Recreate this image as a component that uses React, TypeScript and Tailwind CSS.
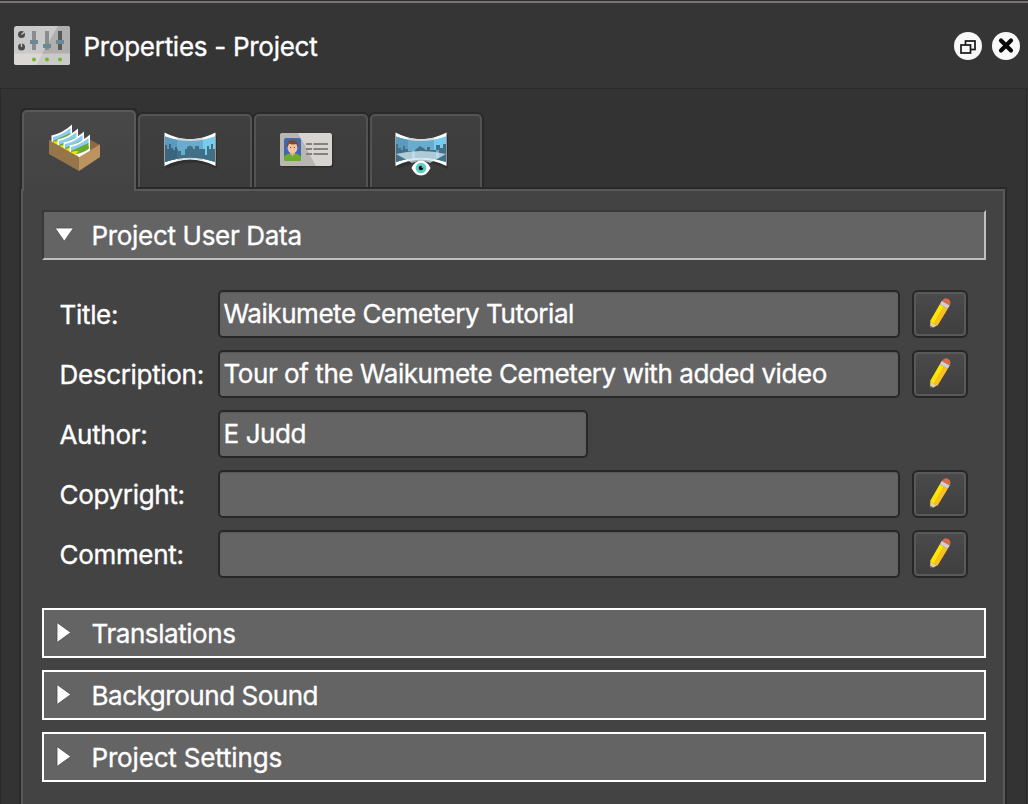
import React from "react";

function MixerIcon() {
  return (
    <svg width="56" height="40" viewBox="0 0 56 40" className="block shrink-0">
      <rect width="56" height="39" rx="2.5" fill="#c9c9c9" />
      <path d="M44 0H53.5Q56 0 56 2.5V28H28Z" fill="#b0afae" />
      <path d="M0 27.5H29L22.500 39H2.500Q0 39 0 36.500Z" fill="#dbd7d5" />
      <path d="M29 27.500H56V36.500Q56 39 53.500 39H22.500Z" fill="#cbc9c7" />
      <g fill="#8c8c8c">
        <rect x="18" y="5" width="4" height="19" />
        <rect x="31" y="5" width="4" height="19" />
      </g>
      <rect x="44" y="5" width="4" height="19" fill="#585858" />
      <g fill="#6b8994">
        <rect x="16" y="14" width="8" height="4" />
        <rect x="29" y="18" width="8" height="4" />
        <rect x="42" y="14" width="8" height="4" />
      </g>
      <circle cx="7.500" cy="8.500" r="3.500" fill="#4b4b4b" />
      <circle cx="7.500" cy="21" r="3.500" fill="#4b4b4b" />
      <path d="M7.500 8.500L11 5.500M7.500 21V17" stroke="#c9c9c9" strokeWidth="1.300" />
      <g fill="#74b62f">
        <circle cx="20" cy="33.500" r="2" />
        <circle cx="33" cy="33.500" r="2" />
        <circle cx="46" cy="33.500" r="2" />
      </g>
    </svg>
  );
}

function BoxIcon() {
  const cards: number[][] = [
    [0, 0],
    [6, 4],
    [12, 7],
    [18, 10],
  ];
  return (
    <svg width="52" height="48" viewBox="0 0 52 48" className="block">
      <path d="M0 17L21 5L51 21L31 33Z" fill="#6f5537" />
      <path d="M30 10L51 21L31 33Z" fill="#8d6a43" />
      {cards.map(([x, y]) => (
        <g key={x} transform={`translate(${x} ${y})`}>
          <path d="M2.500 11.500Q14 9 23 0.500V17Q15 24 2.500 27Z" fill="#fff" />
          <path d="M4 13Q14 10.500 21.500 4V10L5 18L4 17Z" fill="#87cdec" />
          <path d="M4 17L21.500 9V16Q14 22 4 25Z" fill="#69a92c" />
          <path d="M4 18L9 17L18 19Q12 23 4 25Z" fill="#f3e600" />
          <path d="M7 23Q14 19 21.500 13V16Q14 22 7 24Z" fill="#69a92c" />
        </g>
      ))}
      <path d="M0 16L30 33V47L0 30Z" fill="#96754b" />
      <path d="M30 33L51 20.500V33L30 47Z" fill="#bd935f" />
      <path d="M26 30L30 33L41 26.500V24Q35 29 26 30Z" fill="#fff" />
      <path d="M27 29Q34 27 39.500 21.500V24Q34 29 27 30Z" fill="#69a92c" />
    </svg>
  );
}

function Panorama({ view = false }: { view?: boolean }) {
  return (
    <svg width="54" height="46" viewBox="0 0 54 46" className="block">
      <path d="M2 3Q28 16 53 3V37Q28 24 2 37Z" fill="#303030" />
      <path d="M0.500 0.500Q26 14 51.500 0.500V34Q26 21 0.500 34Z" fill="#fff" />
      <path d="M13 5.500Q26 9 39 5.500V28.500Q26 25.500 13 28.500Z" fill="#d4d7d9" />
      <path d="M1 4.500Q26 13.500 51 4.500V30Q26 21.500 1 30Z" fill="#69acce" />
      <path d="M1 4.500Q6 6.500 13 7.800V26.800Q6 28 1 30Z" fill="#5a9abd" />
      <path d="M39 7.800Q46 6.500 51 4.500V30Q46 28 39 26.800Z" fill="#77cbed" />
      {view ? (
        <>
          <path d="M1 12H3V16H6V18H8V14H10V17H13V19H20V18L25 14L30 17V18H32V15H35V18H41V13H45V16H48V12H51V30Q26 21.500 1 30Z" fill="#427087" />
          <path d="M17 19H20V26H17ZM41 18H44V26H41Z" fill="#69acce" />
          <path d="M1 22Q26 16 51 22L35 31Q26 27 17 31Z" fill="#d9eef7" opacity="0.72" />
          <path d="M16.500 36Q20 28.500 26 28.500Q32 28.500 35.500 36Q32 43.500 26 43.500Q20 43.500 16.500 36Z" fill="#fff" />
          <circle cx="26" cy="36" r="5.300" fill="#59d0c8" />
          <circle cx="26" cy="36" r="2.300" fill="#111" />
          <circle cx="27.200" cy="35" r="0.700" fill="#fff" />
        </>
      ) : (
        <>
          <path d="M1 13H3V17H5V12H7V16H9V18H11V15H13V17H14V19H17V23H21V17H23V15L26 13.500L29 15V17H31V14H35V17H41V23H43V14H45V17H47V12H49V17H51V30Q26 21.500 1 30Z" fill="#417086" />
          <path d="M1 13H3V17H5V12H7V16H9V18H11V15H13V26.800Q6 28 1 30Z" fill="#3a677d" />
        </>
      )}
    </svg>
  );
}

function CardIcon() {
  return (
    <svg width="54" height="35" viewBox="0 0 54 35" className="block">
      <rect x="1.500" y="1.500" width="52" height="33" rx="2.500" fill="#303030" />
      <rect width="52" height="33" rx="2.500" fill="#d8d4d2" />
      <path d="M2.500 0H18L36 33H2.500Q0 33 0 30.500V2.500Q0 0 2.500 0Z" fill="#b9b6b4" />
      <rect x="4" y="5" width="17" height="23" rx="2" fill="#3e69b1" />
      <path d="M4 24Q5 21.500 9.500 20.500H15.500Q20 21.500 21 24V26Q21 28 19 28H6Q4 28 4 26Z" fill="#6bac2c" />
      <path d="M10 18H15V21L12.500 23.500L10 21Z" fill="#dba685" />
      <ellipse cx="12.500" cy="14.500" rx="5" ry="6" fill="#f2c3a1" />
      <path d="M7.300 15Q5.500 7 12.500 7Q19.500 7 17.700 15L16.500 11Q12 12 9 10.500Z" fill="#7b4a2d" />
      <circle cx="10.600" cy="14.500" r="0.600" fill="#584030" />
      <circle cx="14.400" cy="14.500" r="0.600" fill="#584030" />
      <g fill="#84827f">
        <path d="M26 10H32V12H26ZM33.500 10H48V12H33.500ZM26 15H32V17H26ZM33.500 15H48V17H33.500ZM26 20H32V22H26ZM33.500 20H48V22H33.500Z" />
      </g>
    </svg>
  );
}

function Pencil() {
  return (
    <svg width="22" height="32" viewBox="0 0 22 32" className="block">
      <path d="M1.300 24.500L8 28.400L3.500 31Q1 31.500 1.200 29Z" fill="#e5cfa0" />
      <path d="M1.200 28.700L4.600 30.400L2 31.500Z" fill="#60503c" />
      <path d="M1 24.300L10.800 7.200L15 9.500L5 27Z" fill="#ffe600" />
      <path d="M14.800 9.300L18.800 11.700L8.500 28.800L4.700 26.800Z" fill="#fcbf22" />
      <path d="M10.800 7.300L12.800 3.800L20.800 8.200L18.800 11.800Z" fill="#cfcfd2" />
      <path d="M12.800 4Q15.300 0 19 1.700Q22.800 4 20.800 8.400Z" fill="#d96c47" />
    </svg>
  );
}

function Header() {
  return (
    <header className="flex h-[88px] shrink-0 flex-col">
      <div className="h-[3px] shrink-0 border-b-2 border-[#787476] bg-[#2d2d2d]" />
      <div className="flex flex-1 items-center pr-2 pl-3.5">
        <MixerIcon />
        <h1 className="ml-[13.5px] pt-0.5 text-[26px] leading-8 tracking-[-0.28px]">Properties - Project</h1>
        <div className="ml-auto flex gap-2.5">
          <button aria-label="Detach" className="block size-7">
            <svg width="28" height="28" viewBox="0 0 28 28">
              <circle cx="14" cy="14" r="14" fill="#f8f8f8" />
              <rect x="11.500" y="9" width="9.500" height="8.500" fill="none" stroke="#171717" strokeWidth="1.700" />
              <rect x="7" y="13" width="9.500" height="8" fill="#f8f8f8" stroke="#171717" strokeWidth="1.700" />
            </svg>
          </button>
          <button aria-label="Close" className="block size-7">
            <svg width="28" height="28" viewBox="0 0 28 28">
              <circle cx="14" cy="14" r="14" fill="#f8f8f8" />
              <path d="M9 8.500L19 18.500M19 8.500L9 18.500" stroke="#080808" strokeWidth="4.200" strokeLinecap="round" />
            </svg>
          </button>
        </div>
      </div>
    </header>
  );
}

const idleTab =
  "box-content flex h-[71px] justify-center rounded-t-[5px] border-x-2 border-t-2 border-[#535353] bg-gradient-to-b from-[#404040] to-[#3b3b3b] shadow-[0_0_0_2px_#292929] self-end";

function Tabs() {
  return (
    <nav className="relative z-10 flex h-[81px] gap-0.5 pl-px">
      <button className="z-10 box-content flex h-[79px] w-[110px] justify-center rounded-t-[5px] border-x-2 border-t-2 border-[#595959] bg-gradient-to-b from-[#484848] to-[#434343] pt-0 shadow-[0_-2px_0_#292929,2px_-2px_0_#292929,-2px_-2px_0_#292929]">
        <span className="mt-3 ml-[-9px]"><BoxIcon /></span>
      </button>
      <div className="flex h-[77px] gap-0.5 overflow-hidden pt-1 pr-0.5">
        <button className={`${idleTab} w-[110px]`}>
          <span className="mt-4 ml-[-9px]"><Panorama /></span>
        </button>
        <button className={`${idleTab} w-[110px]`}>
          <span className="mt-[17px] ml-[-8px]"><CardIcon /></span>
        </button>
        <button className={`${idleTab} w-[108px]`}>
          <span className="mt-4 ml-[-8px]"><Panorama view /></span>
        </button>
      </div>
    </nav>
  );
}

function Section({ title, track, open = false }: { title: string; track: string; open?: boolean }) {
  return (
    <button
      className={`flex h-[50px] w-full shrink-0 items-center border-2 bg-[#646464] text-left ${
        open ? "border-t-[#383838] border-r-[#c0c0c0] border-b-[#c0c0c0] border-l-[#383838]" : "border-white"
      }`}
    >
      <svg width="24" height="24" viewBox="0 0 24 24" className="ml-2 block shrink-0">
        {open ? (
          <path d="M3 5H21.500L12.250 18.200Z" fill="#fff" stroke="#4b4b4b" strokeWidth="0.800" />
        ) : (
          <path d="M5 1.500V21.500L18.800 11.500Z" fill="#fff" stroke="#4b4b4b" strokeWidth="0.800" />
        )}
      </svg>
      <span className={`ml-[15.5px] pt-0.5 text-[26px] leading-8 ${track}`}>{title}</span>
    </button>
  );
}

interface FieldProps {
  label: string;
  value?: string;
  track?: string;
  short?: boolean;
}

function Field({ label, value = "", track = "", short = false }: FieldProps) {
  return (
    <div className="flex h-12">
      <span className="ml-[-0.5px] w-[158.5px] shrink-0 pt-[9px] text-[26px] leading-8 tracking-[-0.32px] whitespace-nowrap">
        {label}
      </span>
      <div
        className={`h-12 shrink-0 rounded-[5px] border-2 border-[#272727] bg-[#646464] pt-1.5 pl-[3.5px] text-[26px] leading-8 whitespace-nowrap shadow-[inset_0_1px_1px_#585858] ${
          short ? "w-[370px]" : "w-[682px]"
        } ${track}`}
      >
        {value}
      </div>
      {!short && (
        <button
          aria-label={`Edit ${label}`}
          className="ml-3 flex h-12 w-14 justify-center rounded-md border-2 border-[#272727] bg-gradient-to-b from-[#4b4b4b] to-[#3e3e3e] pt-[5px] pr-px shadow-[inset_0_0_0_2px_#595959]"
        >
          <Pencil />
        </button>
      )}
    </div>
  );
}

export default function App() {
  return (
    <main className="flex h-[804px] w-[1028px] flex-col overflow-hidden bg-[#353535] font-[Inter,sans-serif] text-white [-webkit-text-stroke:0.35px_white]">
      <Header />
      <div className="mr-px flex-1 border-x border-t border-[#2a2a2a] bg-[#333333] pt-[21px] pl-5">
        <Tabs />
        <section className="mt-[-2px] h-[617px] w-[984px] border-x-2 border-t-2 border-[#595959] bg-[#434343] pt-[19px] pr-[17px] pl-[19px] shadow-[0_0_0_2px_#292929]">
          <Section title="Project User Data" track="tracking-[-0.32px]" open />
          <div className="mt-[30px] mb-[30px] flex flex-col gap-3 pl-[18px]">
            <Field label="Title:" value="Waikumete Cemetery Tutorial" track="tracking-[-0.45px]" />
            <Field label="Description:" value="Tour of the Waikumete Cemetery with added video" track="tracking-[-0.44px]" />
            <Field label="Author:" value="E Judd" track="tracking-[-0.4px]" short />
            <Field label="Copyright:" />
            <Field label="Comment:" />
          </div>
          <div className="flex flex-col gap-3">
            <Section title="Translations" track="tracking-[-0.43px]" />
            <Section title="Background Sound" track="tracking-[-0.46px]" />
            <Section title="Project Settings" track="tracking-[-0.17px]" />
          </div>
        </section>
      </div>
    </main>
  );
}
